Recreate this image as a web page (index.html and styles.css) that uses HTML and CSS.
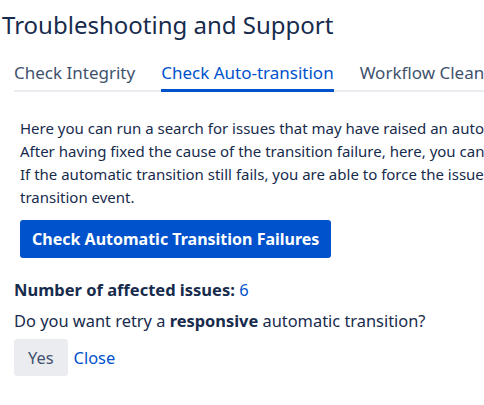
FILE: index.html
```html
<!DOCTYPE html>
<html>
<head>
<meta charset="utf-8">
<link rel="stylesheet" href="styles.css">
</head>
<body>
<div class="page">
  <h1 class="title">Troubleshooting and Support</h1>
  <nav class="tabs">
    <a class="tab">Check Integrity</a>
    <a class="tab active">Check Auto-transition</a>
    <a class="tab">Workflow Cleanup</a>
  </nav>
  <section class="panel">
    <p class="intro">Here you can run a search for issues that may have raised an automatic transition failure.<br>After having fixed the cause of the transition failure, here, you can retry the automatic transition.<br>If the automatic transition still fails, you are able to force the issue into the target status without the<br>transition event.</p>
    <button class="btn-primary">Check Automatic Transition Failures</button>
  </section>
  <section class="result">
    <div class="count"><strong>Number of affected issues:</strong> <a class="link">6</a></div>
    <p class="question">Do you want retry a <strong>responsive</strong> automatic transition?</p>
    <div class="actions">
      <button class="btn-default">Yes</button>
      <a class="link">Close</a>
    </div>
  </section>
</div>
</body>
</html>
```
FILE: styles.css
```css
html, body {
  margin: 0;
  padding: 0;
  overflow: hidden;
  background: #fff;
}
body {
  font-family: "Noto Sans", "Open Sans", sans-serif;
  color: #172B4D;
}
.page {
  width: 760px;
}
.title {
  margin: 0;
  padding: 9px 0 0 2px;
  font-size: 24px;
  font-weight: 400;
  line-height: 32px;
  color: #172B4D;
}
.tabs {
  display: flex;
  gap: 26px;
  margin: 20px 0 0 14px;
  border-bottom: 2px solid #EBECF0;
}
.tab {
  position: relative;
  font-size: 17px;
  line-height: 24px;
  padding-bottom: 5px;
  color: #42526E;
  white-space: nowrap;
}
.tab.active {
  color: #0052CC;
}
.tab.active::after {
  content: "";
  position: absolute;
  left: 0;
  right: 0;
  bottom: -2px;
  height: 3px;
  background: #0052CC;
}
.panel {
  padding: 25px 0 0 20px;
}
.intro {
  margin: 0;
  font-size: 15px;
  line-height: 23px;
  white-space: nowrap;
}
.btn-primary {
  margin-top: 11px;
  height: 38px;
  padding: 0 12px;
  border: none;
  border-radius: 3px;
  background: #0052CC;
  color: #fff;
  font-family: inherit;
  font-size: 16px;
  font-weight: 700;
}
.result {
  padding: 20px 0 0 14px;
}
.count {
  font-size: 16.5px;
  line-height: 24px;
}
.link {
  color: #0052CC;
}
.question {
  margin: 7px 0 0;
  font-size: 16.4px;
  line-height: 24px;
}
.actions {
  display: flex;
  align-items: center;
  gap: 6px;
  margin-top: 6px;
  font-size: 16.4px;
}
.btn-default {
  height: 37px;
  padding: 0 14px;
  border: none;
  border-radius: 3px;
  background: #EBECF0;
  color: #42526E;
  font-family: inherit;
  font-size: 16.4px;
}
```
